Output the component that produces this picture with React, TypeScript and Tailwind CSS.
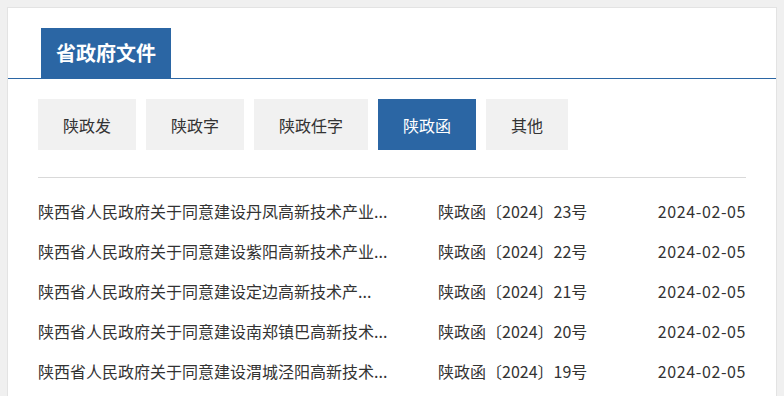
import React from 'react';

const tabs = ['陕政发', '陕政字', '陕政任字', '陕政函', '其他'];

const docs = [
  { title: '陕西省人民政府关于同意建设丹凤高新技术产业...', no: '陕政函〔2024〕23号', date: '2024-02-05' },
  { title: '陕西省人民政府关于同意建设紫阳高新技术产业...', no: '陕政函〔2024〕22号', date: '2024-02-05' },
  { title: '陕西省人民政府关于同意建设定边高新技术产...', no: '陕政函〔2024〕21号', date: '2024-02-05' },
  { title: '陕西省人民政府关于同意建设南郑镇巴高新技术...', no: '陕政函〔2024〕20号', date: '2024-02-05' },
  { title: '陕西省人民政府关于同意建设渭城泾阳高新技术...', no: '陕政函〔2024〕19号', date: '2024-02-05' },
];

const App = () => {
  return (
    <div
      className="min-h-[396px] bg-[#f0f0f0] pt-[7px] px-[7px] text-[#333]"
      style={{ fontFamily: '"Noto Sans CJK SC", "Noto Sans", sans-serif' }}
    >
      <div className="bg-white border border-[#e3e3e3] border-b-0 h-[389px] overflow-hidden">
        {/* Header */}
        <div className="mt-[20px] border-b border-[#2b66a4] pl-[33px]">
          <div className="inline-flex items-center h-[50px] px-[15px] bg-[#2b66a4] text-white text-[20px] font-bold">
            省政府文件
          </div>
        </div>

        <div className="px-[30px]">
          {/* Tabs */}
          <div className="flex gap-[10px] mt-[20px]">
            {tabs.map((tab, index) => (
              <div
                key={index}
                className={
                  index === 3
                    ? 'h-[51px] px-[25px] flex items-center bg-[#2b66a4] text-white text-[16px]'
                    : 'h-[51px] px-[25px] flex items-center bg-[#f1f1f1] text-[#333] text-[16px]'
                }
              >
                {tab}
              </div>
            ))}
          </div>

          <div className="mt-[27px] border-t border-[#d9d9d9] pt-[13px]">
            {docs.map((doc, index) => (
              <div key={index} className="flex items-center h-[40px] text-[16px] text-[#333]">
                <div className="w-[400px] whitespace-nowrap overflow-hidden">{doc.title}</div>
                <div className="flex-1 whitespace-nowrap">{doc.no}</div>
                <div className="whitespace-nowrap tracking-[0.6px]">{doc.date}</div>
              </div>
            ))}
          </div>
        </div>
      </div>
    </div>
  );
};

export default App;
